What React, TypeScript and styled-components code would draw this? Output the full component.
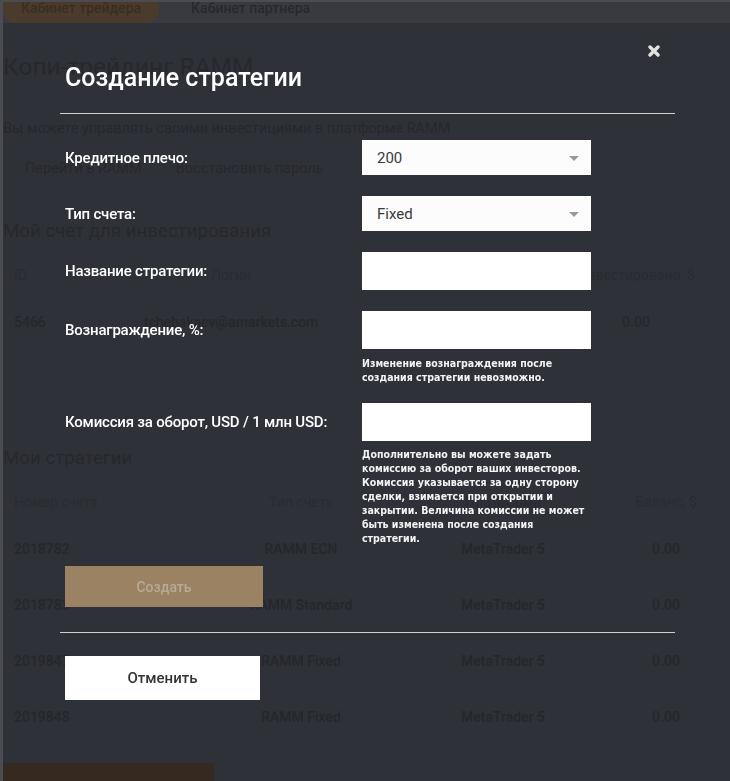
import React from 'react';
import styled, {createGlobalStyle} from 'styled-components';

const GlobalStyle = createGlobalStyle`
  html, body {
    margin: 0;
    padding: 0;
    background: #4b4c52;
    font-family: Roboto, "Noto Sans", sans-serif;
  }
  * { box-sizing: border-box; }
`;

/* ---------- page behind the modal (already dimmed) ---------- */

const Page = styled.div`
  height: 100vh;
  overflow: hidden;
  padding: 2px 0 0 3px;
`;

const TabsBar = styled.div`
  display: flex;
  height: 21px;
  background: #393a3f;
  overflow: hidden;
`;

const Tab = styled.div<{ $active?: boolean }>`
  display: flex;
  align-items: center;
  height: 31px;
  margin-top: -10px;
  padding: 0 18px;
  margin-left: ${p => (p.$active ? '0' : '14px')};
  border-radius: 0 0 13px 13px;
  background: ${p => (p.$active ? '#4b3b2c' : 'transparent')};
  color: ${p => (p.$active ? '#3a2d21' : '#27282d')};
  font-size: 14px;
  font-weight: 500;
`;

const Main = styled.div`
  background: #2f3139;
  height: 100%;
  display: flex;
  flex-direction: column;
  color: #26282d;
`;

const PageTitle = styled.h1`
  margin: 28px 0 0;
  font-size: 24.5px;
  line-height: 32px;
  font-weight: 400;
`;

const Lead = styled.p`
  margin: 36px 0 0;
  font-size: 14.5px;
  line-height: 20px;
`;

const LinkRow = styled.div`
  display: flex;
  margin-top: 12px;
  height: 36px;
  align-items: center;
  padding-left: 22px;
  gap: 34px;
  font-size: 14.5px;
`;

const SectionTitle = styled.h2<{ $gap: number }>`
  margin: ${p => p.$gap}px 0 0;
  font-size: 18.7px;
  line-height: 26px;
  font-weight: 400;
`;

const Table = styled.div<{ $cols: string }>`
  display: grid;
  grid-template-columns: ${p => p.$cols};
  margin-top: 8px;
  font-size: 14px;
  line-height: 18px;
`;

const HeadCell = styled.div<{ $align?: string }>`
  height: 46px;
  display: flex;
  align-items: center;
  justify-content: ${p => p.$align || 'center'};
  padding-left: ${p => (p.$align ? '11px' : '0')};
  color: #292b31;
`;

const Cell = styled.div<{ $align?: string }>`
  height: 56px;
  padding-top: 15px;
  text-align: ${p => (p.$align ? 'left' : 'center')};
  padding-left: ${p => (p.$align ? '11px' : '0')};
  font-weight: 500;
  color: #25272c;
`;

const BottomButton = styled.div`
  margin-top: 14px;
  width: 211px;
  height: 40px;
  background: #362a20;
`;

/* ---------- modal ---------- */

const Overlay = styled.div`
  position: fixed;
  inset: 0;
  overflow: hidden;
`;

const Dialog = styled.div`
  position: relative;
  width: 615px;
  margin-left: 60px;
  padding-top: 64px;
  color: #fff;
`;

const CloseButton = styled.button`
  position: absolute;
  top: 45px;
  right: 15px;
  width: 12px;
  height: 12px;
  padding: 0;
  border: 0;
  background: none;
  display: flex;
  cursor: pointer;
`;

const Title = styled.h3`
  margin: 0;
  padding-left: 5px;
  font-size: 25px;
  line-height: 28px;
  font-weight: 500;
`;

const Divider = styled.hr<{ $gap: number }>`
  margin: ${p => p.$gap}px 0 0;
  border: 0;
  height: 1px;
  background: #cfd0d2;
`;

const Form = styled.form`
  display: flex;
  flex-direction: column;
  gap: 21px;
  margin-top: 26px;
  padding-left: 5px;
`;

const Row = styled.div`
  display: grid;
  grid-template-columns: 297px 229px;
  align-items: start;
`;

const Label = styled.label<{ $h: number }>`
  height: ${p => p.$h}px;
  display: flex;
  align-items: center;
  font-size: 15px;
  font-weight: 500;
  letter-spacing: -0.2px;
`;

const Select = styled.div`
  position: relative;
  height: 35px;
  background: #fcfcfd;
  padding-left: 15px;
  display: flex;
  align-items: center;
  font-size: 15px;
  color: #3a3a3a;

  &::after {
    content: '';
    position: absolute;
    right: 12px;
    top: 16px;
    border-left: 5px solid transparent;
    border-right: 5px solid transparent;
    border-top: 5px solid #9a9a9a;
  }
`;

const Input = styled.input`
  display: block;
  width: 100%;
  height: 38px;
  border: 0;
  outline: none;
  background: #fff;
  padding: 0 15px;
  font-size: 15px;
`;

const Hint = styled.div<{ $gap: number; $after?: number }>`
  margin-top: ${p => p.$gap}px;
  margin-bottom: ${p => p.$after || 0}px;
  font-family: "DejaVu Sans Condensed", "DejaVu Sans", sans-serif;
  font-stretch: condensed;
  font-size: 10.5px;
  line-height: 14px;
  font-weight: 700;
  color: #f4f4f4;
`;

const Button = styled.button<{ $variant: 'primary' | 'light'; $w: number; $h: number }>`
  width: ${p => p.$w}px;
  height: ${p => p.$h}px;
  border: 0;
  font-family: Roboto, sans-serif;
  font-size: ${p => (p.$variant === 'primary' ? '14px' : '15px')};
  font-weight: 500;
  background: ${p => (p.$variant === 'primary' ? '#9a8263' : '#ffffff')};
  color: ${p => (p.$variant === 'primary' ? '#b7aa96' : '#333')};
  cursor: pointer;
`;

const CancelWrap = styled.div`
  margin-top: 23px;
  padding-left: 5px;
`;

const investHead = ['ID', 'Логин', 'Инвестировано, $'];
const strategies = [
    ['2018782', 'RAMM ECN', 'MetaTrader 5', '0.00'],
    ['2018783', 'RAMM Standard', 'MetaTrader 5', '0.00'],
    ['2019847', 'RAMM Fixed', 'MetaTrader 5', '0.00'],
    ['2019848', 'RAMM Fixed', 'MetaTrader 5', '0.00'],
];

const App: React.FC = () => {
    return (
        <>
            <GlobalStyle/>
            <Page>
                <TabsBar>
                    <Tab $active>Кабинет трейдера</Tab>
                    <Tab>Кабинет партнера</Tab>
                </TabsBar>
                <Main>
                    <PageTitle>Копи-трейдинг RAMM</PageTitle>
                    <Lead>Вы можете управлять своими инвестициями в платформе RAMM</Lead>
                    <LinkRow>
                        <span>Перейти в RAMM</span>
                        <span>Восстановить пароль</span>
                    </LinkRow>
                    <SectionTitle $gap={31}>Мой счет для инвестирования</SectionTitle>
                    <Table $cols="120px 216px 224px 146px">
                        <HeadCell $align="flex-start">{investHead[0]}</HeadCell>
                        <HeadCell>{investHead[1]}</HeadCell>
                        <HeadCell/>
                        <HeadCell>{investHead[2]}</HeadCell>
                        <Cell $align="left">5466</Cell>
                        <Cell>tchebakaev@amarkets.com</Cell>
                        <Cell/>
                        <Cell>0.00</Cell>
                    </Table>
                    <SectionTitle $gap={91}>Мои стратегии</SectionTitle>
                    <Table $cols="190px 216px 188px 138px">
                        <HeadCell $align="flex-start">Номер счета</HeadCell>
                        <HeadCell>Тип счета</HeadCell>
                        <HeadCell>Платформа</HeadCell>
                        <HeadCell>Баланс, $</HeadCell>
                        {strategies.map(row => row.map((v, i) => (
                            <Cell key={row[0] + i} $align={i === 0 ? 'left' : undefined}>{v}</Cell>
                        )))}
                    </Table>
                    <BottomButton/>
                </Main>
            </Page>

            <Overlay>
                <Dialog>
                    <CloseButton aria-label="Закрыть">
                        <svg width="12" height="12" viewBox="0 0 12 12">
                            <path d="M2 2 L10 10 M10 2 L2 10" stroke="#e2e2e2" strokeWidth="3.4" strokeLinecap="round"/>
                        </svg>
                    </CloseButton>
                    <Title>Создание стратегии</Title>
                    <Divider $gap={21}/>
                    <Form onSubmit={e => e.preventDefault()}>
                        <Row>
                            <Label $h={35}>Кредитное плечо:</Label>
                            <Select>200</Select>
                        </Row>
                        <Row>
                            <Label $h={35}>Тип счета:</Label>
                            <Select>Fixed</Select>
                        </Row>
                        <Row>
                            <Label $h={38}>Название стратегии:</Label>
                            <Input/>
                        </Row>
                        <Row>
                            <Label $h={38}>Вознаграждение, %:</Label>
                            <div>
                                <Input/>
                                <Hint $gap={7} $after={-2}>Изменение вознаграждения после создания стратегии невозможно.</Hint>
                            </div>
                        </Row>
                        <Row>
                            <Label $h={38}>Комиссия за оборот, USD / 1 млн USD:</Label>
                            <div>
                                <Input/>
                                <Hint $gap={6}>
                                    Дополнительно вы можете задать комиссию за оборот ваших инвесторов.
                                    Комиссия указывается за одну сторону сделки, взимается при открытии и
                                    закрытии. Величина комиссии не может быть изменена после создания стратегии.
                                </Hint>
                            </div>
                        </Row>
                        <Button $variant="primary" $w={198} $h={41} type="submit">Создать</Button>
                    </Form>
                    <Divider $gap={25}/>
                    <CancelWrap>
                        <Button $variant="light" $w={195} $h={44} type="button">Отменить</Button>
                    </CancelWrap>
                </Dialog>
            </Overlay>
        </>
    );
};

export default App;
